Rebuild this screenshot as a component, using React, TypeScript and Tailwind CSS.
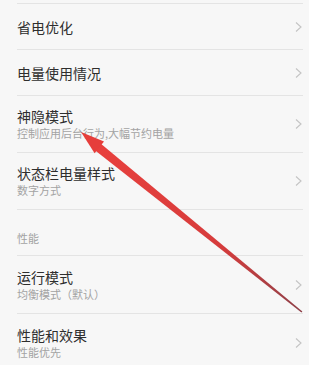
import React from "react";

type RowProps = {
    title: string;
    sub?: string;
    h: string;
};

const Chevron = () => (
    <svg width="9" height="12" viewBox="0 0 9 12" className="shrink-0">
        <path d="M2 1.5 L7 6 L2 10.5" fill="none" stroke="#c4c4c4" strokeWidth="1.1" />
    </svg>
);

const Row = ({ title, sub, h }: RowProps) => {
    return (
        <div className={`ml-[17px] mr-[6px] border-b border-[#e4e4e4] flex items-center justify-between ${h}`}>
            <div className="flex flex-col">
                <p className="text-[14px] leading-[18px] text-[#2e2e2e]">{title}</p>
                {sub && <p className="text-[11px] leading-[16px] text-[#a3a3a3]">{sub}</p>}
            </div>
            <Chevron />
        </div>
    );
};

// hand-drawn red arrow pointing at the 神隐模式 row
const Arrow = () => (
    <svg width="309" height="365" viewBox="0 0 309 365" className="absolute left-0 top-0 pointer-events-none">
        <defs>
            <linearGradient id="shaft" x1="98" y1="147" x2="302" y2="312" gradientUnits="userSpaceOnUse">
                <stop offset="0" stopColor="#e8403d" />
                <stop offset="0.6" stopColor="#d63c3c" />
                <stop offset="1" stopColor="#8e4048" />
            </linearGradient>
        </defs>
        <polygon points="100.6,143.6 95.2,150.6 301.4,312.6 302.4,311.4" fill="url(#shaft)" />
        <polygon points="81,132 104,141.6 94.6,153.2" fill="#e63e3b" />
    </svg>
);

export default function App() {
    return (
        <div
            className="relative w-[309px] h-[365px] overflow-hidden bg-[#f7f7f7]"
            style={{ fontFamily: '"Noto Sans CJK SC", "Noto Sans", sans-serif' }}
        >
            <div className="ml-[17px] mr-[6px] h-[4px] border-b border-[#e4e4e4]" />
            <Row title="省电优化" h="h-[46px]" />
            <Row title="电量使用情况" h="h-[46px]" />
            <Row title="神隐模式" sub="控制应用后台行为,大幅节约电量" h="h-[57px]" />
            <Row title="状态栏电量样式" sub="数字方式" h="h-[57px]" />
            <div className="ml-[17px] mr-[6px] h-[46px] border-b border-[#e4e4e4] flex items-end pb-[10px]">
                <p className="text-[11px] leading-[14px] text-[#a3a3a3]">性能</p>
            </div>
            <Row title="运行模式" sub="均衡模式（默认）" h="h-[58px]" />
            <Row title="性能和效果" sub="性能优先" h="h-[58px]" />
            <Arrow />
        </div>
    );
}
